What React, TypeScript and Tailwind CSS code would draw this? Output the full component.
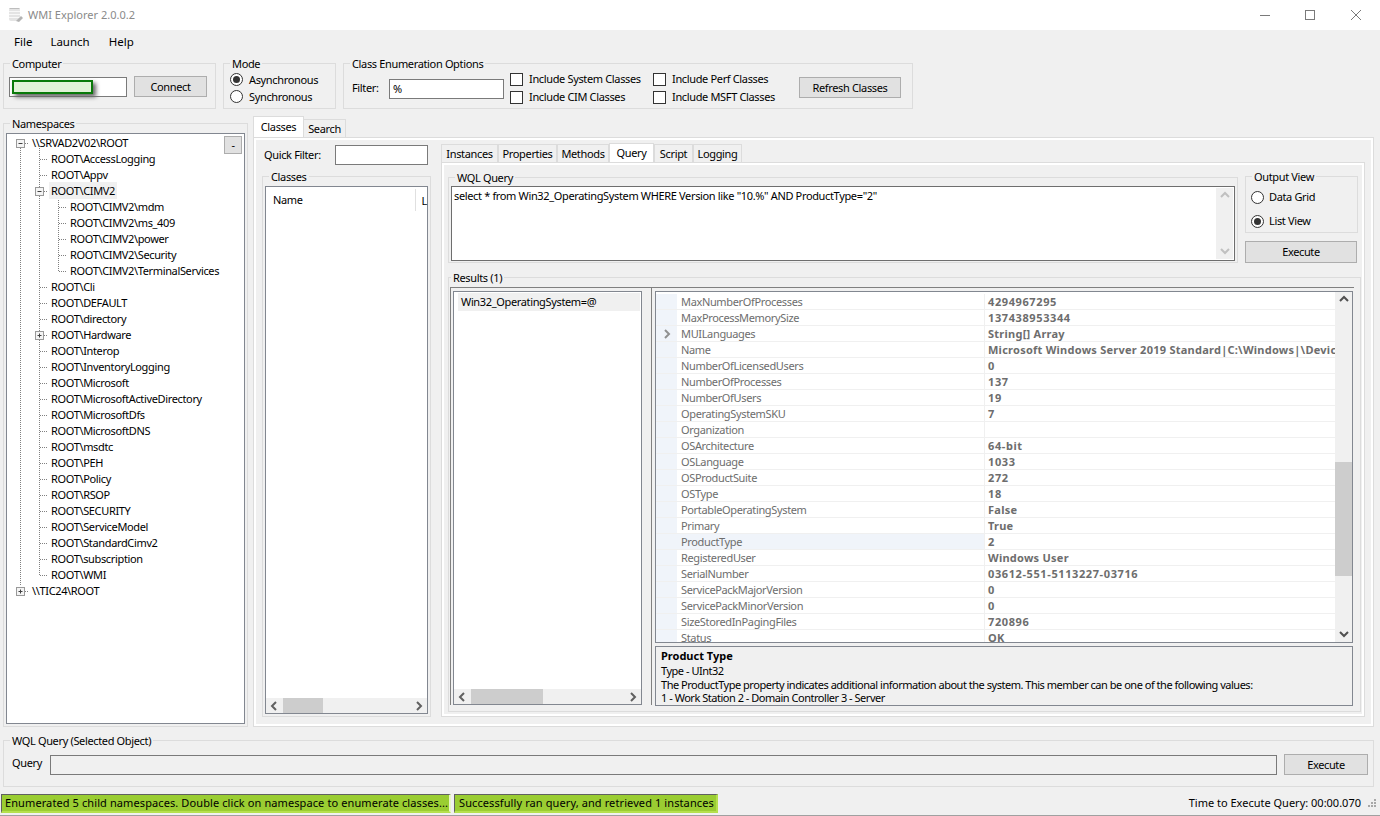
import type { ReactNode } from "react";

const props: [string, string][] = [
  ["MaxNumberOfProcesses", "4294967295"],
  ["MaxProcessMemorySize", "137438953344"],
  ["MUILanguages", "String[] Array"],
  ["Name", "Microsoft Windows Server 2019 Standard|C:\\Windows|\\Device\\Harddisk0\\Partition2"],
  ["NumberOfLicensedUsers", "0"],
  ["NumberOfProcesses", "137"],
  ["NumberOfUsers", "19"],
  ["OperatingSystemSKU", "7"],
  ["Organization", ""],
  ["OSArchitecture", "64-bit"],
  ["OSLanguage", "1033"],
  ["OSProductSuite", "272"],
  ["OSType", "18"],
  ["PortableOperatingSystem", "False"],
  ["Primary", "True"],
  ["ProductType", "2"],
  ["RegisteredUser", "Windows User"],
  ["SerialNumber", "03612-551-5113227-03716"],
  ["ServicePackMajorVersion", "0"],
  ["ServicePackMinorVersion", "0"],
  ["SizeStoredInPagingFiles", "720896"],
  ["Status", "OK"],
];

const tree: [number, string][] = [
  [0, "\\\\SRVAD2V02\\ROOT"],
  [1, "ROOT\\AccessLogging"],
  [1, "ROOT\\Appv"],
  [1, "ROOT\\CIMV2"],
  [2, "ROOT\\CIMV2\\mdm"],
  [2, "ROOT\\CIMV2\\ms_409"],
  [2, "ROOT\\CIMV2\\power"],
  [2, "ROOT\\CIMV2\\Security"],
  [2, "ROOT\\CIMV2\\TerminalServices"],
  [1, "ROOT\\Cli"],
  [1, "ROOT\\DEFAULT"],
  [1, "ROOT\\directory"],
  [1, "ROOT\\Hardware"],
  [1, "ROOT\\Interop"],
  [1, "ROOT\\InventoryLogging"],
  [1, "ROOT\\Microsoft"],
  [1, "ROOT\\MicrosoftActiveDirectory"],
  [1, "ROOT\\MicrosoftDfs"],
  [1, "ROOT\\MicrosoftDNS"],
  [1, "ROOT\\msdtc"],
  [1, "ROOT\\PEH"],
  [1, "ROOT\\Policy"],
  [1, "ROOT\\RSOP"],
  [1, "ROOT\\SECURITY"],
  [1, "ROOT\\ServiceModel"],
  [1, "ROOT\\StandardCimv2"],
  [1, "ROOT\\subscription"],
  [1, "ROOT\\WMI"],
  [0, "\\\\TIC24\\ROOT"],
];

const indent = ["pl-[25px]", "pl-[44px]", "pl-[63px]"];

const Group = ({ label, className, labelLeft, children }: { label: string; className: string; labelLeft?: string; children?: ReactNode }) => (
  <div className={"relative shrink-0 border border-[#dcdcdc] " + className}>
    <div className={"absolute top-[-8px] bg-[#f0f0f0] px-[2px] leading-[16px] whitespace-nowrap " + (labelLeft ?? "left-[6px]")}>{label}</div>
    {children}
  </div>
);

const Button = ({ label, className }: { label: string; className: string }) => (
  <div className={"flex shrink-0 items-center justify-center border border-[#adadad] bg-[#e1e1e1] " + className}>{label}</div>
);

const Radio = ({ checked }: { checked?: boolean }) => (
  <div className="flex h-[13px] w-[13px] shrink-0 items-center justify-center rounded-full border border-[#333] bg-white">
    {checked && <div className="h-[7px] w-[7px] rounded-full bg-[#333]" />}
  </div>
);

const Check = ({ label, className }: { label: string; className: string }) => (
  <div className={"flex items-center whitespace-nowrap " + className}>
    <div className="mr-[6px] h-[13px] w-[13px] shrink-0 border border-[#333] bg-white" />
    {label}
  </div>
);

// direction chevron for the scrollbars
const Arrow = ({ d, color }: { d: "up" | "down" | "left" | "right"; color: string }) => {
  const pts = {
    up: "1,6 5,2 9,6",
    down: "1,3 5,7 9,3",
    left: "6,1 2,5 6,9",
    right: "3,1 7,5 3,9",
  }[d];
  return (
    <svg width="10" height="10" viewBox="0 0 10 10" className="shrink-0">
      <polyline points={pts} fill="none" stroke={color} strokeWidth="2" />
    </svg>
  );
};

const HScroll = ({ thumb }: { thumb: string }) => (
  <div className="flex h-[15px] shrink-0 items-center bg-[#f0f0f0]">
    <div className="flex w-[17px] shrink-0 justify-center"><Arrow d="left" color="#606060" /></div>
    <div className={"h-full shrink-0 bg-[#cdcdcd] " + thumb} />
    <div className="flex-1" />
    <div className="flex w-[17px] shrink-0 justify-center"><Arrow d="right" color="#606060" /></div>
  </div>
);

const TreeLines = () => (
  <svg className="absolute left-0 top-0" width="100" height="480" viewBox="0 0 100 480" fill="none" stroke="#808080" strokeDasharray="1 1">
    <path d="M13.5 14V452" />
    <path d="M32.5 14V442" />
    <path d="M51.5 62V138" />
    <path d="M18 9.5H22" />
    <path d="M18 457.5H22" />
    <path d="M33 25.5H41M33 41.5H41M37 57.5H41M33 153.5H41M33 169.5H41M33 185.5H41M37 201.5H41M33 217.5H41M33 233.5H41M33 249.5H41M33 265.5H41M33 281.5H41M33 297.5H41M33 313.5H41M33 329.5H41M33 345.5H41M33 361.5H41M33 377.5H41M33 393.5H41M33 409.5H41M33 425.5H41M33 441.5H41" />
    <path d="M52 73.5H60M52 89.5H60M52 105.5H60M52 121.5H60M52 137.5H60" />
    <g strokeDasharray="none">
      <rect x="9.5" y="5.5" width="8" height="8" fill="#f4f4f4" stroke="#999" />
      <path d="M11.5 9.5H15.5" stroke="#404040" />
      <rect x="28.5" y="53.5" width="8" height="8" fill="#f4f4f4" stroke="#999" />
      <path d="M30.5 57.5H34.5" stroke="#404040" />
      <rect x="28.5" y="197.5" width="8" height="8" fill="#f4f4f4" stroke="#999" />
      <path d="M30.5 201.5H34.5M32.5 199.5V203.5" stroke="#404040" />
      <rect x="9.5" y="453.5" width="8" height="8" fill="#f4f4f4" stroke="#999" />
      <path d="M11.5 457.5H15.5M13.5 455.5V459.5" stroke="#404040" />
    </g>
  </svg>
);

const tabs = ["Instances", "Properties", "Methods", "Query", "Script", "Logging"];
const tabW = ["w-[57px]", "w-[59px]", "w-[52px]", "w-[45px]", "w-[39px]", "w-[49px]"];

export default function App() {
  return (
    <div className="flex h-[816px] w-[1380px] flex-col overflow-hidden bg-[#f0f0f0] font-['Noto_Sans',sans-serif] text-[11px] leading-[16px] tracking-[-0.35px] text-black">
      {/* title bar */}
      <div className="flex h-[30px] shrink-0 items-center bg-white tracking-normal">
        <svg width="16" height="17" viewBox="0 0 16 17" className="ml-[8px] mr-[4px]">
          <rect x="1" y="1" width="11" height="13" rx="2" fill="#e4e4e4" />
          <path d="M1 4.5H12M1 7.5H12M1 10.5H12" stroke="#f8f8f8" />
          <path d="M1.5 1.5H11.5" stroke="#bdbdbd" />
          <path d="M8 14L13 9L15 11L11 15Z" fill="#b4b4b4" />
        </svg>
        <span className="text-[#8a8a8a]">WMI Explorer 2.0.0.2</span>
        <div className="ml-auto flex items-center">
          <svg width="12" height="12" viewBox="0 0 12 12" fill="none" stroke="#7a7a7a" className="mr-[33px]"><path d="M1 6.5H11" /></svg>
          <svg width="12" height="12" viewBox="0 0 12 12" fill="none" stroke="#7a7a7a" className="mr-[34px]"><rect x="1.5" y="1.5" width="9" height="9" /></svg>
          <svg width="12" height="12" viewBox="0 0 12 12" fill="none" stroke="#7a7a7a" className="mr-[18px]"><path d="M1 1L11 11M11 1L1 11" /></svg>
        </div>
      </div>

      {/* menu */}
      <div className="flex h-[24px] shrink-0 items-center pl-[14px] text-[11.5px] tracking-normal">
        <span className="mr-[18px]">File</span>
        <span className="mr-[19px]">Launch</span>
        <span>Help</span>
      </div>

      {/* toolbar */}
      <div className="mt-[9px] flex shrink-0 gap-[7px] pl-[3px]">
        <Group label="Computer" className="flex h-[46px] w-[213px] items-start gap-[7px] pl-[5px] pt-[13px]">
          <div className="relative h-[20px] w-[118px] shrink-0 border border-[#7a7a7a] bg-white">
            <div className="absolute left-[2px] top-[2px] h-[14px] w-[81px] border-2 border-[#0a7a0a] bg-[#e2f3d8] shadow-[3px_3px_4px_#666]" />
          </div>
          <Button label="Connect" className="mt-[-1px] h-[21px] w-[73px]" />
        </Group>
        <Group label="Mode" className="h-[46px] w-[113px] pl-[6px] pt-[7px]">
          <div className="flex h-[17px] items-center gap-[6px]"><Radio checked />Asynchronous</div>
          <div className="flex h-[17px] items-center gap-[6px]"><Radio />Synchronous</div>
        </Group>
        <Group label="Class Enumeration Options" className="flex h-[46px] w-[570px] pl-[8px]">
          <span className="mt-[16px] w-[37px] shrink-0">Filter:</span>
          <div className="mt-[15px] h-[20px] w-[115px] shrink-0 border border-[#7a7a7a] bg-white pl-[3px] leading-[18px]">%</div>
          <div className="ml-[6px] w-[143px] shrink-0 pt-[6px]">
            <Check label="Include System Classes" className="h-[18px]" />
            <Check label="Include CIM Classes" className="h-[18px]" />
          </div>
          <div className="w-[146px] shrink-0 pt-[6px]">
            <Check label="Include Perf Classes" className="h-[18px]" />
            <Check label="Include MSFT Classes" className="h-[18px]" />
          </div>
          <Button label="Refresh Classes" className="mt-[13px] h-[21px] w-[102px]" />
        </Group>
      </div>

      {/* main */}
      <div className="mt-[7px] flex h-[611px] shrink-0 pl-[3px]">
        <Group label="Namespaces" className="mt-[7px] h-[604px] w-[245px] px-[2px] pb-[2px] pt-[9px]">
          <div className="relative h-full overflow-hidden border border-[#828790] bg-white pt-px">
            <TreeLines />
            <div className="absolute right-[2px] top-[2px] flex h-[18px] w-[18px] items-center justify-center border border-[#adadad] bg-[#e1e1e1]">-</div>
            {tree.map(([lvl, t], i) => (
              <div key={i} className={"relative h-[16px] whitespace-nowrap " + indent[lvl]}>
                <span className={t === "ROOT\\CIMV2" ? "ml-[-2px] bg-[#f0f0f0] px-[2px] py-px" : ""}>{t}</span>
              </div>
            ))}
          </div>
        </Group>

        <div className="ml-[5px] flex w-[1121px] shrink-0 flex-col">
          <div className="flex h-[21px] shrink-0 items-end">
            <div className="flex h-[21px] w-[51px] items-center justify-center border border-b-0 border-[#dcdcdc] bg-white">Classes</div>
            <div className="flex h-[18px] w-[42px] items-center justify-center border border-b-0 border-l-0 border-[#dcdcdc]">Search</div>
          </div>
          <div className="flex min-h-0 flex-1 border border-[#dcdcdc]">
            <div className="flex flex-1 border-[2px] border-white">
              {/* classes column */}
              <div className="ml-[6px] flex w-[169px] shrink-0 flex-col">
                <div className="mt-[5px] flex h-[20px] shrink-0 items-center pl-[2px]">
                  <span className="w-[71px] shrink-0">Quick Filter:</span>
                  <div className="h-[20px] w-[93px] border border-[#7a7a7a] bg-white" />
                </div>
                <Group label="Classes" className="mt-[11px] h-[541px] px-[2px] pb-[2px] pt-[9px]">
                  <div className="flex h-full flex-col border border-[#828790] bg-white">
                    <div className="flex h-[24px] shrink-0 items-center pl-[7px] pt-px">
                      <span className="w-[143px]">Name</span>
                      <div className="h-[22px] border-l border-[#e0e0e0] pl-[6px] leading-[24px]">L</div>
                    </div>
                    <div className="flex-1" />
                    <HScroll thumb="w-[40px]" />
                  </div>
                </Group>
              </div>

              {/* query side */}
              <div className="ml-[10px] flex w-[924px] shrink-0 flex-col">
                <div className="mt-[3px] flex h-[19px] shrink-0 items-end">
                  {tabs.map((t, i) => (
                    <div key={t} className={"flex items-center justify-center border border-b-0 border-[#dcdcdc] " + tabW[i] + (t === "Query" ? " h-[19px] bg-white" : " h-[18px]")}>{t}</div>
                  ))}
                </div>
                <div className="h-[555px] shrink-0 border border-[#dcdcdc]">
                  <div className="h-full border-[2px] border-white pl-[4px]">
                    <div className="mt-[11px] flex gap-[7px]">
                      <Group label="WQL Query" className="mt-px h-[86px] w-[790px] px-[2px] pt-[8px]">
                        <div className="flex h-[75px] border border-[#6e6e6e] bg-white pl-[2px]">
                          <div className="flex-1 pt-px">select * from Win32_OperatingSystem WHERE Version like "10.%" AND ProductType="2"</div>
                          <div className="my-px mr-px flex w-[17px] flex-col items-center justify-between bg-[#f0f0f0] py-[3px]">
                            <Arrow d="up" color="#c0c0c0" />
                            <Arrow d="down" color="#c0c0c0" />
                          </div>
                        </div>
                      </Group>
                      <div className="w-[113px] shrink-0">
                        <Group label="Output View" className="h-[57px] pl-[5px] pt-[8px]">
                          <div className="flex h-[24px] items-center gap-[5px]"><Radio />Data Grid</div>
                          <div className="flex h-[24px] items-center gap-[5px]"><Radio checked />List View</div>
                        </Group>
                        <Button label="Execute" className="mt-[8px] h-[22px] w-[112px]" />
                      </div>
                    </div>

                    <Group label="Results (1)" labelLeft="left-[2px]" className="mt-[14px] flex h-[435px] w-[913px] pb-[6px] pl-px pt-[9px]">
                      <div className="h-full w-[201px] shrink-0 border-l border-t border-[#808080] pl-[2px] pt-[3px]">
                        <div className="flex h-full w-[189px] flex-col border border-[#828790] bg-white">
                          <div className="ml-[4px] mr-[1px] mt-px flex h-[18px] shrink-0 items-center bg-[#f0f0f0] pl-[3px]">Win32_OperatingSystem=@</div>
                          <div className="flex-1" />
                          <HScroll thumb="w-[72px]" />
                        </div>
                      </div>
                      <div className="h-full w-[703px] shrink-0 border-l border-t border-[#808080] pl-[3px] pt-[3px]">
                        <div className="relative h-[352px] w-[698px] overflow-hidden border border-[#828790] bg-white pt-[2px]">
                          {props.map(([k, v]) => (
                            <div key={k} className="flex h-[16px] border-b border-[#f0f0f0]">
                              <div className="relative flex w-[21px] shrink-0 items-center justify-center bg-[#f0f4fa]">
                                {k === "MUILanguages" && <Arrow d="right" color="#909090" />}
                              </div>
                              <div className={"w-[308px] shrink-0 border-r border-[#f0f0f0] pl-[4px] text-[#6d6d6d] " + (k === "ProductType" ? "bg-[#f0f4fa]" : "")}>{k}</div>
                              <div className={"w-[351px] shrink-0 overflow-hidden whitespace-nowrap pl-[3px] font-bold text-[#6d6d6d] " + (/^\d/.test(v) ? "tracking-[0.6px]" : "tracking-[0.25px]")}>{v}</div>
                            </div>
                          ))}
                          <div className="absolute bottom-0 right-0 top-0 flex w-[17px] flex-col items-center justify-between bg-[#f0f0f0] py-[3px]">
                            <Arrow d="up" color="#505050" />
                            <div className="absolute left-0 top-[170px] h-[114px] w-full bg-[#cdcdcd]" />
                            <Arrow d="down" color="#505050" />
                          </div>
                        </div>
                        <div className="mt-[3px] h-[60px] w-[698px] border border-[#828790] pl-[5px] pt-px leading-[13px] tracking-[-0.48px]">
                          <div className="h-[16px] font-bold leading-[16px] tracking-normal">Product Type</div>
                          <div className="h-[14px]">Type - UInt32</div>
                          <div className="h-[13px]">The ProductType property indicates additional information about the system. This member can be one of the following values:</div>
                          <div className="h-[13px]">1 - Work Station 2 - Domain Controller 3 - Server</div>
                        </div>
                      </div>
                    </Group>
                  </div>
                </div>
              </div>
            </div>
          </div>
        </div>
      </div>

      {/* selected object query */}
      <div className="ml-[3px] mt-[13px] shrink-0">
        <Group label="WQL Query (Selected Object)" className="flex h-[47px] w-[1371px] items-start pl-[8px] pt-[14px]">
          <span className="w-[38px] shrink-0">Query</span>
          <div className="h-[20px] w-[1227px] shrink-0 border border-[#7a7a7a] bg-[#f0f0f0]" />
          <Button label="Execute" className="ml-[7px] mt-[-1px] h-[21px] w-[84px]" />
        </Group>
      </div>

      {/* status bar */}
      <div className="mt-[7px] flex h-[22px] shrink-0 items-start border-b border-[#a0a0a0] pl-px tracking-[0.1px]">
        <div className="flex h-[19px] w-[450px] items-center whitespace-nowrap border-b-2 border-l border-r-2 border-t border-b-[#b5e04d] border-l-[#606060] border-r-[#e8f5c8] border-t-[#606060] bg-[#9acd32] pl-[3px]">Enumerated 5 child namespaces. Double click on namespace to enumerate classes...</div>
        <div className="ml-[3px] flex h-[19px] w-[264px] items-center whitespace-nowrap border-b-2 border-l border-r-2 border-t border-b-[#b5e04d] border-l-[#606060] border-r-[#b5e04d] border-t-[#606060] bg-[#9acd32] pl-[4px]">Successfully ran query, and retrieved 1 instances</div>
        <div className="ml-auto mt-[1px] flex items-center pr-[4px] tracking-normal">
          <span className="mr-[7px] whitespace-nowrap">Time to Execute Query: 00:00.070</span>
          <svg width="8" height="12" viewBox="0 0 8 12" fill="#a8a8a8"><rect x="6" y="2" width="2" height="2" /><rect x="3" y="5" width="2" height="2" /><rect x="6" y="5" width="2" height="2" /><rect x="0" y="8" width="2" height="2" /><rect x="3" y="8" width="2" height="2" /><rect x="6" y="8" width="2" height="2" /></svg>
        </div>
      </div>
    </div>
  );
}
